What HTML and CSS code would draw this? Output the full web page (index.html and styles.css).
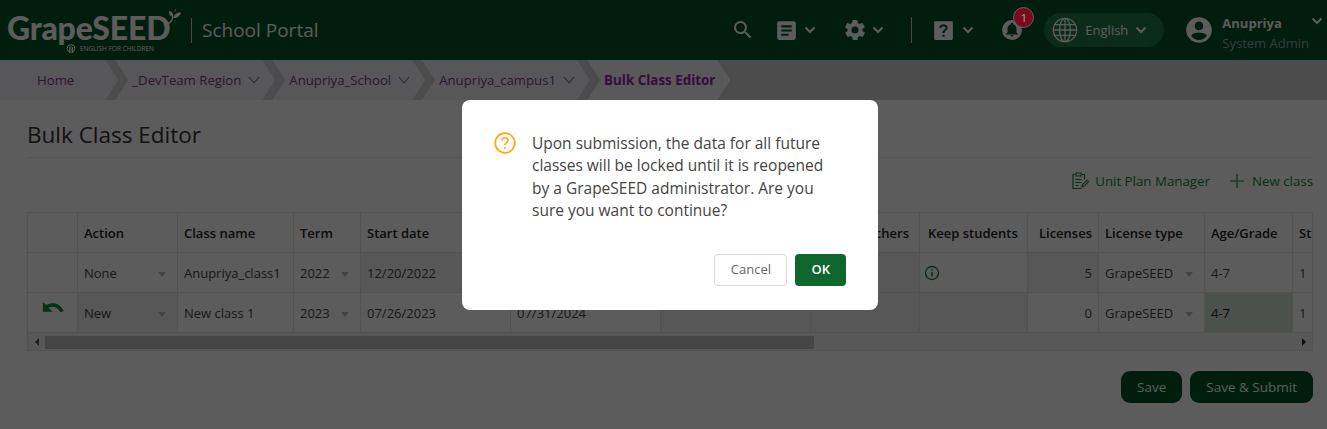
FILE: index.html
```html
<!DOCTYPE html>
<html lang="en">
<head>
    <meta charset="UTF-8">
    <title>Bulk Class Editor</title>
    <link rel="stylesheet" href="styles.css">
</head>
<body>
    <header class="topbar">
        <div class="brand">
            <div class="logo">
                <span class="logo-word">GrapeSEED</span>
                <svg class="logo-leaf" viewBox="0 0 20 20"><path d="M1 19c6-1 9-4 10-9" fill="none" stroke="#fff" stroke-width="1.500"/><path d="M11 10C8 9 6 7 7 3c3 1 5 3 4 7zM11 11c2-4 4-6 9-6-1 4-5 7-9 6z" fill="#fff"/><path d="M13 4l1-3" fill="none" stroke="#fff" stroke-width="0.800"/></svg>
                <svg class="logo-mark" viewBox="0 0 10 10"><circle cx="5" cy="4.500" r="3.800" fill="none" stroke="#fff" stroke-width="1"/><path d="M3.500 3v6M6.500 3v6M5 2v5" fill="none" stroke="#fff" stroke-width="0.900"/></svg>
                <span class="logo-sub">ENGLISH FOR CHILDREN</span>
            </div>
            <span class="portal">School Portal</span>
        </div>
        <nav class="tools">
            <svg class="ico search" viewBox="0 0 24 24"><path d="M15.500 14h-.79l-.28-.27A6.471 6.471 0 0 0 16 9.500 6.500 6.500 0 1 0 9.500 16c1.610 0 3.090-.59 4.230-1.570l.27.28v.79l5 4.990L20.490 19l-4.990-5zm-6 0C7.010 14 5 11.990 5 9.500S7.010 5 9.500 5 14 7.010 14 9.500 11.990 14 9.500 14z"/></svg>
            <span class="tool doc">
                <svg class="ico" viewBox="0 0 24 24"><path d="M19 3H5a2 2 0 0 0-2 2v14c0 1.100.9 2 2 2h14a2 2 0 0 0 2-2V5a2 2 0 0 0-2-2zm-5 14H7v-2h7v2zm3-4H7v-2h10v2zm0-4H7V7h10v2z"/></svg>
                <svg class="chev" viewBox="0 0 12 8"><path d="M1.500 1.500 6 6l4.500-4.500"/></svg>
            </span>
            <span class="tool gear">
                <svg class="ico" viewBox="0 0 24 24"><path d="M19.400 13c0-.3.100-.6.100-1s0-.7-.1-1l2.100-1.600c.2-.2.200-.4.100-.6l-2-3.500c-.1-.2-.4-.3-.6-.2l-2.500 1c-.5-.4-1.100-.7-1.700-1l-.4-2.600c0-.3-.2-.5-.5-.5h-4c-.3 0-.5.200-.5.400l-.4 2.700c-.6.200-1.100.6-1.700 1l-2.500-1c-.2-.1-.5 0-.6.200l-2 3.500c-.1.200-.1.500.1.600L4.600 11c0 .3-.1.700-.1 1s0 .7.100 1l-2.100 1.600c-.2.200-.2.400-.1.600l2 3.500c.1.200.4.300.6.200l2.500-1c.5.400 1.100.7 1.700 1l.4 2.600c0 .2.200.400.500.400h4c.3 0 .5-.2.500-.4l.4-2.600c.6-.3 1.200-.6 1.700-1l2.500 1c.2.100.5 0 .6-.2l2-3.500c.1-.2.100-.5-.1-.6L19.400 13zM12 15.500a3.500 3.500 0 1 1 0-7 3.500 3.500 0 0 1 0 7z"/></svg>
                <svg class="chev" viewBox="0 0 12 8"><path d="M1.500 1.500 6 6l4.500-4.500"/></svg>
            </span>
            <span class="divider"></span>
            <span class="tool help">
                <svg class="ico" viewBox="0 0 24 24"><path fill-rule="evenodd" d="M4 3h16a1 1 0 0 1 1 1v16a1 1 0 0 1-1 1H4a1 1 0 0 1-1-1V4a1 1 0 0 1 1-1zm7 13v2h2v-2h-2zm1-10c-2.200 0-4 1.600-4 3.600h2c0-1 .9-1.700 2-1.700s2 .7 2 1.700c0 1.800-3 1.700-3 4.900h2c0-2.300 3-2.600 3-4.900C16 7.600 14.200 6 12 6z"/></svg>
                <svg class="chev" viewBox="0 0 12 8"><path d="M1.500 1.500 6 6l4.500-4.500"/></svg>
            </span>
            <span class="bell">
                <svg class="ico" viewBox="0 0 24 24"><path fill-rule="evenodd" d="M12 2a10 10 0 1 1 0 20 10 10 0 0 1 0-20zm0 16.500c.9 0 1.500-.6 1.500-1.500h-3c0 .9.700 1.500 1.500 1.500zm4.500-4v-3.500c0-2.200-1.200-4-3.200-4.500V6a1.300 1.300 0 0 0-2.600 0v.5c-2 .5-3.200 2.300-3.200 4.500v3.500L6 16v.5h12V16l-1.500-1.500z"/></svg>
                <span class="badge">1</span>
            </span>
            <span class="lang">
                <svg class="globe" viewBox="0 0 24 24"><g fill="none" stroke="#fff" stroke-width="1.200"><circle cx="12" cy="12" r="10.800"/><ellipse cx="12" cy="12" rx="5" ry="10.800"/><path d="M12 1.500v21M2.800 7h18.400M1.500 12h21M2.800 17h18.400"/></g></svg>
                <span>English</span>
                <svg class="chev" viewBox="0 0 12 8"><path d="M1.500 1.500 6 6l4.500-4.500"/></svg>
            </span>
            <span class="user">
                <svg class="avatar" viewBox="0 0 24 24"><path fill-rule="evenodd" d="M12 1a11 11 0 1 1 0 22 11 11 0 0 1 0-22zm0 3.800a3.700 3.700 0 1 0 0 7.400 3.700 3.700 0 0 0 0-7.400zm0 15.800c2.800 0 5.300-1.400 6.800-3.600-1.200-1.800-4.400-2.800-6.800-2.800s-5.600 1-6.800 2.800c1.500 2.200 4 3.600 6.800 3.600z"/></svg>
                <span class="user-text">
                    <b>Anupriya</b>
                    <small>System Admin</small>
                </span>
                <svg class="chev user-chev" viewBox="0 0 12 8"><path d="M1.500 1.500 6 6l4.500-4.500"/></svg>
            </span>
        </nav>
    </header>

    <div class="crumbs">
        <a class="crumb crumb-first">Home</a>
        <a class="crumb">_DevTeam Region <svg class="down" viewBox="0 0 12 8"><path d="M1 1l5 6 5-6"/></svg></a>
        <a class="crumb">Anupriya_School <svg class="down" viewBox="0 0 12 8"><path d="M1 1l5 6 5-6"/></svg></a>
        <a class="crumb">Anupriya_campus1 <svg class="down" viewBox="0 0 12 8"><path d="M1 1l5 6 5-6"/></svg></a>
        <a class="crumb crumb-current">Bulk Class Editor</a>
    </div>

    <main class="page">
        <h1 class="title">Bulk Class Editor</h1>
        <div class="actions">
            <a class="action">
                <svg class="act-ico" viewBox="0 0 18 18"><path d="M4 2.500H2v14h8.500M11 2.500h2.500v5M5 1v3h5V1H5zM4.500 7.500h6M4.500 10.500h6M4.500 13.500h3M11 15l.6-2.500 4.400-4.300 1.500 1.500-4.300 4.400z" fill="none" stroke-width="1.100"/></svg>
                <span>Unit Plan Manager</span>
            </a>
            <a class="action">
                <svg class="act-ico" viewBox="0 0 18 18"><path d="M9 2v14M2 9h14" fill="none" stroke-width="1.100"/></svg>
                <span>New class</span>
            </a>
        </div>

        <div class="table">
            <div class="grid">
                <div class="th"></div>
                <div class="th">Action</div>
                <div class="th">Class name</div>
                <div class="th">Term</div>
                <div class="th">Start date</div>
                <div class="th">End date</div>
                <div class="th"></div>
                <div class="th th-right teachers">Teachers</div>
                <div class="th keep">Keep students</div>
                <div class="th th-right">Licenses</div>
                <div class="th">License type</div>
                <div class="th">Age/Grade</div>
                <div class="th">St</div>

                <div class="td"></div>
                <div class="td select">None</div>
                <div class="td">Anupriya_class1</div>
                <div class="td select">2022</div>
                <div class="td dim">12/20/2022</div>
                <div class="td dim"></div>
                <div class="td dim"></div>
                <div class="td dim"></div>
                <div class="td"><svg class="info" viewBox="0 0 16 16"><circle cx="8" cy="8" r="6.500" fill="none" stroke-width="1.300"/><path d="M8 7v4.500M8 4.300v1.500" fill="none" stroke-width="1.500"/></svg></div>
                <div class="td dim td-right">5</div>
                <div class="td select">GrapeSEED</div>
                <div class="td">4-7</div>
                <div class="td">1</div>

                <div class="td undo"><svg viewBox="0 0 24 16"><path d="M3 1v8.500h8.500L8 6c3.800-2 8-.8 10.500 4l3-1.200C18.500 2.200 12 .200 6 3.500L3 1z"/></svg></div>
                <div class="td select dim">New</div>
                <div class="td">New class 1</div>
                <div class="td select">2023</div>
                <div class="td">07/26/2023</div>
                <div class="td">07/31/2024</div>
                <div class="td dim"></div>
                <div class="td dim"></div>
                <div class="td dim"></div>
                <div class="td td-right">0</div>
                <div class="td select">GrapeSEED</div>
                <div class="td dark">4-7</div>
                <div class="td">1</div>
            </div>
            <div class="scroll">
                <span class="arrow arrow-left"></span>
                <span class="track"><span class="thumb"></span></span>
                <span class="arrow arrow-right"></span>
            </div>
        </div>

        <div class="buttons">
            <button class="btn">Save</button>
            <button class="btn">Save &amp; Submit</button>
        </div>
    </main>

    <div class="mask">
        <div class="dialog">
            <div class="dialog-body">
                <svg class="question" viewBox="0 0 22 22"><circle cx="11" cy="11" r="9.800" fill="none" stroke="#faad14" stroke-width="1.800"/><path d="M8 8.600c0-1.700 1.300-2.800 3-2.800s3 1.100 3 2.600c0 2.200-3 2.300-3 4.600" fill="none" stroke="#faad14" stroke-width="1.600"/><circle cx="11" cy="16" r="1.100" fill="#faad14"/></svg>
                <p>Upon submission, the data for all future classes will be locked until it is reopened by a GrapeSEED administrator. Are you sure you want to continue?</p>
            </div>
            <div class="dialog-btns">
                <button class="cancel">Cancel</button>
                <button class="ok">OK</button>
            </div>
        </div>
    </div>
</body>
</html>
```

FILE: styles.css
```css
* {
    box-sizing: border-box;
}
html, body {
    height: 100%;
}
body {
    margin: 0;
    font-family: "Open Sans", "Noto Sans", sans-serif;
    font-size: 13px;
    color: #333;
    background-color: #fff;
    overflow: hidden;
}

/* top bar */
.topbar {
    height: 60px;
    background-color: #045226;
    color: #fff;
    display: flex;
    align-items: center;
}
.brand {
    display: flex;
    align-items: center;
}
.logo {
    position: relative;
    width: 191px;
    height: 60px;
}
.logo-word {
    position: absolute;
    left: 7px;
    top: 12px;
    font-family: "Lato", sans-serif;
    font-weight: 900;
    font-size: 32px;
    line-height: 32px;
    letter-spacing: -0.2px;
    color: #fff;
}
.logo-leaf {
    position: absolute;
    left: 163px;
    top: 8px;
    width: 18px;
    height: 18px;
}
.logo-mark {
    position: absolute;
    left: 66px;
    top: 44px;
    width: 10px;
    height: 10px;
}
.logo-sub {
    position: absolute;
    left: 80px;
    top: 45px;
    font-size: 6.500px;
    line-height: 8px;
    white-space: nowrap;
}
.portal {
    border-left: 1px solid #ccc;
    padding-left: 10px;
    font-size: 19px;
    line-height: 25px;
}
.tools {
    display: flex;
    align-items: center;
    margin-left: auto;
}
.ico {
    width: 25px;
    height: 25px;
    fill: #fff;
    display: block;
}
.tool {
    display: flex;
    align-items: center;
    gap: 5px;
}
.chev {
    width: 12px;
    height: 8px;
    fill: none;
    stroke: #fff;
    stroke-width: 2;
}
.search {
    width: 24px;
    height: 24px;
    margin-right: 19px;
}
.doc {
    margin-right: 27px;
}
.gear {
    margin-right: 27px;
}
.gear .ico {
    width: 24px;
    height: 24px;
}
.divider {
    width: 1px;
    height: 26px;
    background-color: #ccc;
    margin-right: 19px;
}
.help {
    gap: 6px;
    margin-right: 26px;
}
.bell {
    position: relative;
    margin-right: 20px;
}
.bell .ico {
    width: 24px;
    height: 24px;
}
.badge {
    position: absolute;
    z-index: 20;
    left: 13px;
    top: -11px;
    width: 21px;
    height: 21px;
    border-radius: 50%;
    background-color: #7a0a20;
    border: 1px solid #666;
    color: #c9a0a6;
    font-size: 11px;
    line-height: 19px;
    text-align: center;
}
.lang {
    width: 120px;
    height: 34px;
    border-radius: 17px;
    background-color: #1f7b45;
    display: flex;
    align-items: center;
    padding-left: 8px;
    gap: 7px;
}
.globe {
    width: 26px;
    height: 26px;
}
.user {
    display: flex;
    align-items: center;
    margin-left: 21px;
    position: relative;
    padding-right: 18px;
}
.avatar {
    width: 28px;
    height: 28px;
    fill: #fff;
    margin-right: 9px;
}
.user-text {
    display: flex;
    flex-direction: column;
    line-height: 20px;
    padding-top: 5px;
}
.user-text b {
    font-size: 13px;
}
.user-text small {
    font-size: 13px;
    color: #9aa;
}
.user-chev {
    position: absolute;
    right: 4px;
    top: 9px;
}

/* breadcrumb */
.crumbs {
    height: 40px;
    background-color: #d2d2d2;
    display: flex;
}
.crumb {
    height: 40px;
    display: flex;
    align-items: center;
    gap: 7px;
    padding: 0 15px 0 17px;
    margin-right: -3px;
    font-size: 13.200px;
    background-color: #f2eef5;
    color: #7a3f8c;
    clip-path: polygon(0 0, calc(100% - 13px) 0, 100% 50%, calc(100% - 13px) 100%, 0 100%, 13px 50%);
}
.crumb-first {
    padding-left: 37px;
    padding-right: 44px;
    clip-path: polygon(0 0, calc(100% - 13px) 0, 100% 50%, calc(100% - 13px) 100%, 0 100%);
}
.crumb-current {
    font-size: 13.400px;
    font-weight: 700;
    color: #8a2ca8;
    background-color: #f7f3f9;
}
.down {
    width: 12px;
    height: 8px;
    fill: none;
    stroke: #7a3f8c;
    stroke-width: 1;
}

/* page */
.page {
    padding: 20px 14px 0 27px;
}
.title {
    margin: 0;
    font-weight: 400;
    font-size: 22.500px;
    line-height: 29px;
    padding-bottom: 8px;
    border-bottom: 1px solid #e8e8e8;
    color: #333;
}
.actions {
    display: flex;
    justify-content: flex-end;
    gap: 18px;
    height: 54px;
    padding-top: 12px;
    color: #14803c;
}
.action {
    display: flex;
    align-items: center;
    gap: 6px;
    height: 22px;
    font-size: 13.300px;
}
.act-ico {
    width: 18px;
    height: 18px;
    stroke: #14803c;
}

/* table */
.table {
    border: 1px solid #e2e2e2;
    height: 139px;
    overflow: hidden;
}
.grid {
    display: grid;
    grid-template-columns: 50px 100px 116px 67px 150px 150px 150px 109px 108px 71px 106px 88px 40px;
    grid-auto-rows: 40px;
    height: 120px;
}
.th, .td {
    border-right: 1px solid #e2e2e2;
    border-bottom: 1px solid #e2e2e2;
    padding: 0 6px;
    display: flex;
    align-items: center;
    white-space: nowrap;
    position: relative;
    color: #444;
}
.th {
    font-weight: 600;
    color: #222;
}
.th-right, .td-right {
    justify-content: flex-end;
}
.teachers {
    padding-right: 10px;
}
.keep {
    padding-left: 8px;
}
.dim {
    background-color: #f0f0f0;
}
.dark {
    background-color: #d6e0d9;
    color: #111;
}
.select::after {
    content: "";
    position: absolute;
    right: 11px;
    top: 19px;
    border-left: 4px solid transparent;
    border-right: 4px solid transparent;
    border-top: 5px solid #bbb;
}
.undo {
    justify-content: center;
}
.undo svg {
    width: 28px;
    height: 18px;
    fill: #0c8a3c;
    margin-top: -6px;
}
.info {
    width: 16px;
    height: 16px;
    stroke: #14803c;
    margin-left: -2px;
}
.scroll {
    height: 18px;
    display: flex;
    align-items: center;
    background-color: #f4f4f4;
}
.arrow {
    width: 17px;
    display: flex;
    justify-content: center;
}
.arrow-left::before {
    content: "";
    border-top: 4px solid transparent;
    border-bottom: 4px solid transparent;
    border-right: 4px solid #555;
}
.arrow-right::before {
    content: "";
    border-top: 4px solid transparent;
    border-bottom: 4px solid transparent;
    border-left: 4px solid #222;
}
.track {
    flex: 1;
    height: 13px;
}
.thumb {
    display: block;
    width: 769px;
    height: 13px;
    background-color: #c0c0c0;
}

/* save buttons */
.buttons {
    display: flex;
    justify-content: flex-end;
    gap: 8px;
    margin-top: 20px;
}
.btn {
    height: 32px;
    border: 0;
    border-radius: 9px;
    padding: 0 16px;
    background-color: #045226;
    color: #fff;
    font-family: inherit;
    font-size: 13.500px;
}

/* confirm dialog */
.mask {
    position: fixed;
    z-index: 10;
    inset: 0;
    background-color: rgba(0, 0, 0, 0.64);
}
.dialog {
    position: absolute;
    left: 462px;
    top: 100px;
    width: 416px;
    height: 210px;
    border-radius: 8px;
    background-color: #fff;
    padding: 32px;
}
.dialog-body {
    display: flex;
    gap: 16px;
}
.question {
    width: 22px;
    height: 22px;
    flex: none;
}
.dialog-body p {
    margin: 0;
    max-width: 300px;
    font-size: 15.500px;
    line-height: 22.400px;
    color: #444;
}
.dialog-btns {
    display: flex;
    justify-content: flex-end;
    gap: 8px;
    margin-top: 32px;
}
.cancel, .ok {
    height: 32px;
    border-radius: 4px;
    font-family: inherit;
    font-size: 13px;
    padding-bottom: 2px;
}
.cancel {
    padding-left: 15.500px;
    padding-right: 15.500px;
    background-color: #fff;
    border: 1px solid #d9d9d9;
    color: #666;
}
.ok {
    padding-left: 16px;
    padding-right: 16px;
    background-color: #0f672e;
    border: 0;
    color: #fff;
    font-weight: 600;
}
```
